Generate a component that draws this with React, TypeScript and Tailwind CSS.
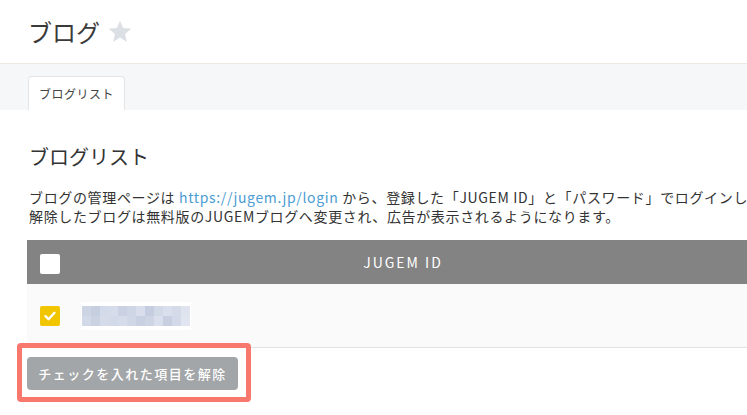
import React from 'react';

const blobRows: string[][] = [
  ['#cdd5e4', '#c6cfe0', '#d3daea', '#d6dcea', '#c9d1e3', '#cfd6e6', '#d8deeb', '#c5cee0', '#d2d9e7', '#d9dfec', '#d4dae8', '#dfe3ee'],
  ['#d2d9e8', '#cbd3e3', '#d5dbe9', '#d2d9e8', '#d6dcea', '#d0d7e7', '#c8d0e2', '#cdd4e4', '#d9dfec', '#c7cfe1', '#d3d9e8', '#e1e5ef'],
];

const StarIcon: React.FC = () => (
  <svg width="24" height="23" viewBox="0 0 24 23">
    <path d="M12 0.5l3.1 7.6 8.2 0.6-6.3 5.3 2 8-7-4.4-7 4.4 2-8L0.7 8.7l8.2-0.6z" fill="#dcdfe4" />
  </svg>
);

const App: React.FC = () => {
  return (
    <div
      className="w-full h-[415px] overflow-hidden bg-white text-[#333]"
      style={{ fontFamily: '"Noto Sans CJK JP", "Noto Sans", sans-serif' }}
    >
      <header className="h-16 flex items-center gap-[8px] px-[28px] border-b border-[#ede9e0]">
        <h1 className="text-[24px] leading-none text-[#3a3a3a]">ブログ</h1>
        <StarIcon />
      </header>

      <div className="h-[46px] bg-[#f6f7f9] pl-[28px] pt-[12px] flex">
        <div className="w-[97px] h-[34px] bg-white border border-b-0 border-[#e4e4e4] rounded-t-[4px] flex items-center justify-center text-[12px] tracking-[0.5px] text-[#444]">
          ブログリスト
        </div>
      </div>

      <main className="relative pl-[27px] pt-[34px]">
        <h2 className="pl-[2px] text-[20px] leading-[26px] text-[#333]">ブログリスト</h2>

        <div className="mt-[18px] pl-[2px] text-[14px] leading-[19px] tracking-[0.65px] whitespace-nowrap text-[#333]">
          <p>
            ブログの管理ページは <a className="text-[#4c9dd3]">https://jugem.jp/login</a> から、登録した「JUGEM ID」と「パスワード」でログインしてください。
          </p>
          <p>解除したブログは無料版のJUGEMブログへ変更され、広告が表示されるようになります。</p>
        </div>

        <div className="mt-[14px] w-[752px]">
          <div className="h-[44px] bg-[#838383] flex items-center relative">
            <div className="absolute left-[13px] top-[14px] w-[20px] h-[20px] bg-white rounded-[2px]" />
            <div className="flex-1 text-center text-white text-[14px] tracking-[2px]">JUGEM ID</div>
          </div>
          <div className="h-[64px] bg-[#fafafa] border-b border-[#e2e2e2] flex items-center pl-[13px] gap-[21px]">
            <div className="w-[20px] h-[20px] bg-[#f1c500] rounded-[2px] flex items-center justify-center">
              <svg width="12" height="10" viewBox="0 0 12 10">
                <path d="M1.5 5.2l3 3 6-6.4" fill="none" stroke="#fff" strokeWidth="2.4" strokeLinecap="round" strokeLinejoin="round" />
              </svg>
            </div>
            <div className="bg-white px-[1px] py-[4px]">
              {blobRows.map((row, i) => (
                <div key={i} className="flex">
                  {row.map((c, j) => (
                    <div key={j} className="w-[9px] h-[10px]" style={{ backgroundColor: c }} />
                  ))}
                </div>
              ))}
            </div>
          </div>
        </div>

        <div className="pt-[9px]">
          <button className="w-[211px] h-[33px] bg-[#a2a6a8] rounded-[4px] text-white text-[13px] font-medium tracking-[1.5px]">
            チェックを入れた項目を解除
          </button>
        </div>

        <div className="absolute left-[17px] top-[233px] w-[234px] h-[59px] border-[5px] border-[#f8786e] rounded-[4px]" />
      </main>
    </div>
  );
};

export default App;
